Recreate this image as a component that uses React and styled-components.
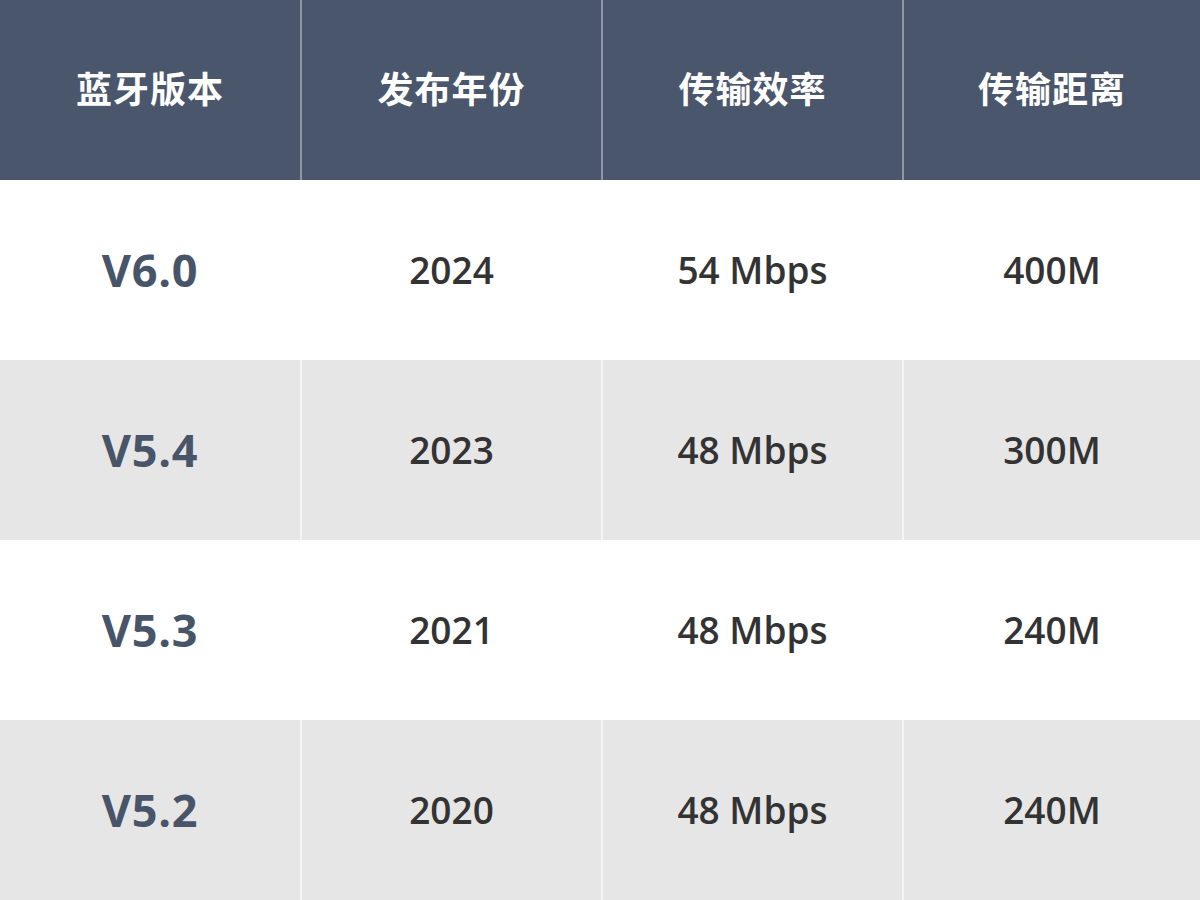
import React from "react";
import styled, { createGlobalStyle } from "styled-components";

const Global = createGlobalStyle`
  html, body { margin: 0; padding: 0; background: #ffffff; }
  body { font-family: "Open Sans", "Noto Sans CJK SC", sans-serif; }
`;

const Table = styled.div`
  width: 1200px;
  height: 900px;
  display: flex;
  flex-direction: column;
  overflow: hidden;
`;

const Row = styled.div`
  display: grid;
  grid-template-columns: 300px 299px 299px 1fr;
  column-gap: 2px;
  height: 180px;
  background: ${(p) => p.$line};
`;

const HeadCell = styled.div`
  display: flex;
  align-items: center;
  justify-content: center;
  padding-bottom: 6px;
  background: #4a566b;
  color: #ffffff;
  font-family: "Noto Sans CJK SC", sans-serif;
  font-size: 36px;
  font-weight: 700;
  letter-spacing: 1px;
`;

const Cell = styled.div`
  display: flex;
  align-items: center;
  justify-content: center;
  padding-bottom: 2px;
  background: ${(p) => p.$bg};
  color: ${(p) => (p.$lead ? "#485569" : "#333333")};
  font-size: ${(p) => (p.$lead ? 45 : 37)}px;
  font-weight: ${(p) => (p.$lead ? 700 : 600)};
  letter-spacing: ${(p) => (p.$lead ? 0.8 : 0)}px;
`;

const header = ["蓝牙版本", "发布年份", "传输效率", "传输距离"];
const rows = [
  ["V6.0", "2024", "54 Mbps", "400M"],
  ["V5.4", "2023", "48 Mbps", "300M"],
  ["V5.3", "2021", "48 Mbps", "240M"],
  ["V5.2", "2020", "48 Mbps", "240M"],
];

export default function App() {
  return (
    <>
      <Global />
      <Table>
        <Row $line="#8e97a5">
          {header.map((h) => (
            <HeadCell key={h}>{h}</HeadCell>
          ))}
        </Row>
        {rows.map((r, i) => {
          const gray = i % 2 === 1;
          return (
            <Row key={r[0]} $line={gray ? "#f5f5f5" : "#ffffff"}>
              {r.map((c, j) => (
                <Cell key={j} $bg={gray ? "#e6e6e6" : "#ffffff"} $lead={j === 0}>
                  {c}
                </Cell>
              ))}
            </Row>
          );
        })}
      </Table>
    </>
  );
}
